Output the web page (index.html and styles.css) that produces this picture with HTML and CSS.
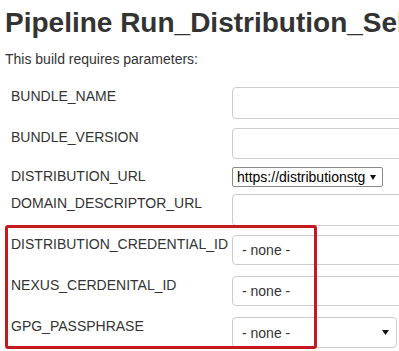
FILE: index.html
```html
<!DOCTYPE html>
<html lang="en">
<head>
<meta charset="utf-8">
<title>Pipeline Run_Distribution_Select</title>
<link rel="stylesheet" href="styles.css">
</head>
<body>
<main class="page">
  <h1 class="title">Pipeline Run_Distribution_Select</h1>
  <p class="intro">This build requires parameters:</p>
  <div class="params">
    <div class="label">BUNDLE_NAME</div>
    <div class="field"><div class="text-input tall"></div></div>

    <div class="label">BUNDLE_VERSION</div>
    <div class="field"><div class="text-input mid"></div></div>

    <div class="label">DISTRIBUTION_URL</div>
    <div class="field">
      <div class="native-select">
        <span>https://distributionstg</span>
        <svg class="arrow" width="6" height="5" viewBox="0 0 6 5"><path d="M0 0H6L3 5Z"/></svg>
      </div>
    </div>

    <div class="label">DOMAIN_DESCRIPTOR_URL</div>
    <div class="field"><div class="text-input tall"></div></div>

    <div class="label">DISTRIBUTION_CREDENTIAL_ID</div>
    <div class="field"><div class="cred-select"><span>- none -</span></div></div>

    <div class="label">NEXUS_CERDENITAL_ID</div>
    <div class="field"><div class="cred-select"><span>- none -</span></div></div>

    <div class="label">GPG_PASSPHRASE</div>
    <div class="field">
      <div class="cred-select narrow">
        <span>- none -</span>
        <svg class="arrow" width="7" height="5" viewBox="0 0 7 5"><path d="M0 0H7L3.5 5Z"/></svg>
      </div>
    </div>
  </div>
  <div class="highlight"></div>
</main>
</body>
</html>
```
FILE: styles.css
```css
html, body {
  margin: 0;
  padding: 0;
  background: #fff;
}

body {
  width: 399px;
  height: 351px;
  overflow: hidden;
  font-family: "Liberation Sans", Arial, sans-serif;
  color: #333;
}

.page {
  position: relative;
  box-sizing: border-box;
  padding: 6px 0 0 5px;
  height: 351px;
}

.title {
  margin: 0;
  font-size: 28px;
  font-weight: bold;
  line-height: 34px;
  white-space: nowrap;
}

.intro {
  margin: 11px 0 0;
  font-size: 14px;
  line-height: 16px;
}

.params {
  margin-top: 20px;
  padding-left: 6px;
  display: grid;
  grid-template-columns: 221px 220px;
  grid-template-rows: 41px 39px 27px 41px 41px 41px 41px;
}

.label {
  font-size: 14px;
  line-height: 16px;
  padding-top: 1px;
  white-space: nowrap;
  color: #333;
}

.text-input,
.cred-select {
  box-sizing: border-box;
  width: 220px;
  border: 1px solid #ccc;
  border-radius: 4px;
  background: #fff;
}

.tall { height: 32px; }
.mid { height: 31px; }

.native-select {
  box-sizing: border-box;
  width: 151px;
  height: 20px;
  border: 1px solid #8a8a8a;
  border-radius: 2px;
  padding: 0 6px 0 4px;
  display: flex;
  align-items: center;
  justify-content: space-between;
  font-size: 14px;
  color: #000;
  white-space: nowrap;
}

.cred-select {
  height: 30px;
  display: flex;
  align-items: center;
  justify-content: space-between;
  padding: 0 7px 0 9px;
  font-size: 14px;
  color: #333;
}

.cred-select.narrow {
  width: 165px;
  height: 31px;
}

.arrow {
  fill: #111;
  flex: none;
}

.highlight {
  position: absolute;
  left: 5px;
  top: 225px;
  width: 312px;
  height: 124px;
  box-sizing: border-box;
  border: 3px solid #c41a1f;
  border-radius: 3px;
  pointer-events: none;
}
```
